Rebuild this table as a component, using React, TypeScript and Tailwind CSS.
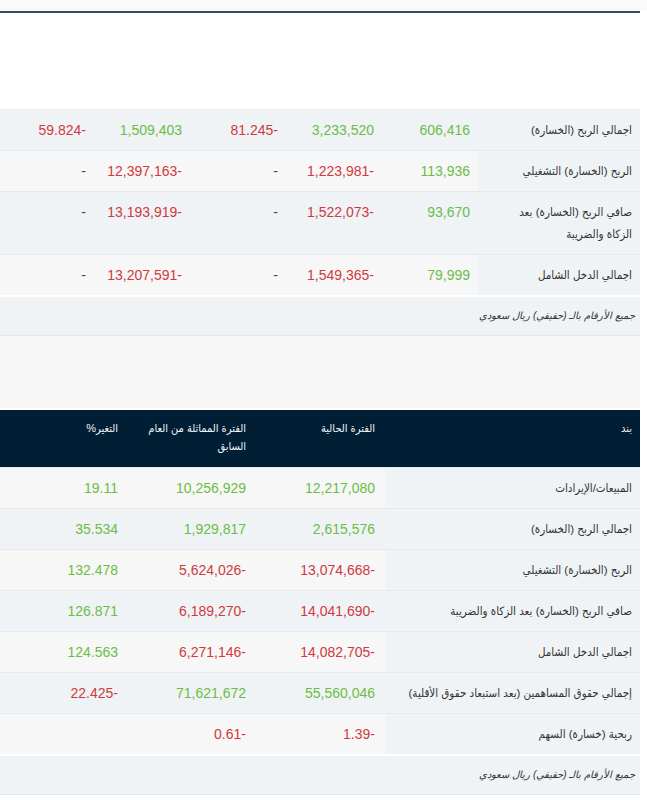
import React from "react";

type Cell = { v: string; c: "g" | "r" | "n" };

const G = (v: string): Cell => ({ v, c: "g" });
const R = (v: string): Cell => ({ v, c: "r" });
const N = (v: string): Cell => ({ v, c: "n" });

const colorOf = (c: Cell["c"]) =>
  c === "g" ? "text-[#6cbd45]" : c === "r" ? "text-[#cf3a40]" : "text-[#444]";

const table1: { label: string[]; cells: Cell[]; blue: boolean }[] = [
  {
    label: ["اجمالي الربح (الخسارة)"],
    cells: [G("606,416"), G("3,233,520"), R("-81.245"), G("1,509,403"), R("-59.824")],
    blue: true,
  },
  {
    label: ["الربح (الخسارة) التشغيلي"],
    cells: [G("113,936"), R("-1,223,981"), N("-"), R("-12,397,163"), N("-")],
    blue: false,
  },
  {
    label: ["صافي الربح (الخسارة) بعد", "الزكاة والضريبة"],
    cells: [G("93,670"), R("-1,522,073"), N("-"), R("-13,193,919"), N("-")],
    blue: true,
  },
  {
    label: ["اجمالي الدخل الشامل"],
    cells: [G("79,999"), R("-1,549,365"), N("-"), R("-13,207,591"), N("-")],
    blue: false,
  },
];

const table2: { label: string; cells: Cell[]; blue: boolean }[] = [
  { label: "المبيعات/الإيرادات", cells: [G("12,217,080"), G("10,256,929"), G("19.11")], blue: false },
  { label: "اجمالي الربح (الخسارة)", cells: [G("2,615,576"), G("1,929,817"), G("35.534")], blue: true },
  { label: "الربح (الخسارة) التشغيلي", cells: [R("-13,074,668"), R("-5,624,026"), G("132.478")], blue: false },
  {
    label: "صافي الربح (الخسارة) بعد الزكاة والضريبة",
    cells: [R("-14,041,690"), R("-6,189,270"), G("126.871")],
    blue: true,
  },
  { label: "اجمالي الدخل الشامل", cells: [R("-14,082,705"), R("-6,271,146"), G("124.563")], blue: false },
  {
    label: "إجمالي حقوق المساهمين (بعد استبعاد حقوق الأقلية)",
    cells: [G("55,560,046"), G("71,621,672"), R("-22.425")],
    blue: true,
  },
  { label: "ربحية (خسارة) السهم", cells: [R("-1.39"), R("-0.61"), N("")], blue: false },
];

const FONT = "font-['Liberation_Sans','DejaVu_Sans_Condensed','DejaVu_Sans',Arial,sans-serif]";

function Footnote({ cols }: { cols: number }) {
  return (
    <tr className="bg-[#eff3f6] border-t-2 border-white border-b border-b-[#e2e9ee]">
      <td colSpan={cols} className="pr-[5px] py-[9px] leading-[20px] text-[10px] italic text-[#333]">
        جميع الأرقام بالـ (حقيقي) ريال سعودي
      </td>
    </tr>
  );
}

export default function App() {
  return (
    <div className={`w-[647px] min-h-[800px] bg-white ${FONT}`}>
      <div className="h-[11px] bg-[#fafafa]" />
      <div className="h-[2px] w-[640px] bg-[#3b4b57]" />
      <div className="h-[97px] w-[640px] bg-white border-b border-[#eef1f3]" />

      <table dir="rtl" className="w-[640px] table-fixed border-collapse">
        <colgroup>
          <col className="w-[162px]" />
          <col className="w-[96px]" />
          <col className="w-[96px]" />
          <col className="w-[96px]" />
          <col className="w-[96px]" />
          <col className="w-[94px]" />
        </colgroup>
        <tbody>
          {table1.map((row, i) => (
            <tr
              key={i}
              className={`${row.blue ? "bg-[#eff3f6]" : "bg-[#f7f7f7]"} border-b border-[#e3e9ee]`}
            >
              <td className="bg-[#eff3f6] pr-[8px] pl-[6px] py-[9px] leading-[22px] text-[11.5px] text-[#333] align-top">
                {row.label.map((l, k) => (
                  <div key={k}>{l}</div>
                ))}
              </td>
              {row.cells.map((c, j) => (
                <td
                  key={j}
                  className={`pr-[8px] py-[9px] leading-[22px] text-[14px] align-top text-right ${colorOf(c.c)}`}
                >
                  {c.v}
                </td>
              ))}
            </tr>
          ))}
          <Footnote cols={6} />
        </tbody>
      </table>

      <div className="h-[74px] w-[640px] bg-[#f7f7f7] border-b-2 border-white" />

      <table dir="rtl" className="w-[640px] table-fixed border-collapse">
        <colgroup>
          <col className="w-[255px]" />
          <col className="w-[129px]" />
          <col className="w-[128px]" />
          <col className="w-[128px]" />
        </colgroup>
        <thead>
          <tr className="bg-[#001f35] text-[#f2f4f6] text-[11px] leading-[18px]">
            <th className="font-normal text-right align-top pr-[8px] pt-[9px] pb-[12px]">بند</th>
            <th className="font-normal text-right align-top pr-[10px] pt-[9px] pb-[12px]">الفترة الحالية</th>
            <th className="font-normal text-right align-top pr-[10px] pt-[9px] pb-[12px] whitespace-nowrap">
              الفترة المماثلة من العام
              <br />
              السابق
            </th>
            <th className="font-normal text-right align-top pr-[10px] pt-[9px] pb-[12px]">التغير%</th>
          </tr>
        </thead>
        <tbody>
          {table2.map((row, i) => (
            <tr
              key={i}
              className={`${row.blue ? "bg-[#eff3f6]" : "bg-[#f7f7f7]"} border-t border-[#e3e9ee]`}
            >
              <td className="bg-[#eff3f6] pr-[8px] py-[9px] leading-[22px] text-[11.5px] text-[#333] align-top whitespace-nowrap">
                {row.label}
              </td>
              {row.cells.map((c, j) => (
                <td
                  key={j}
                  className={`pr-[10px] py-[9px] leading-[22px] text-[14px] align-top text-right ${colorOf(c.c)}`}
                >
                  {c.v}
                </td>
              ))}
            </tr>
          ))}
          <Footnote cols={4} />
        </tbody>
      </table>
    </div>
  );
}
